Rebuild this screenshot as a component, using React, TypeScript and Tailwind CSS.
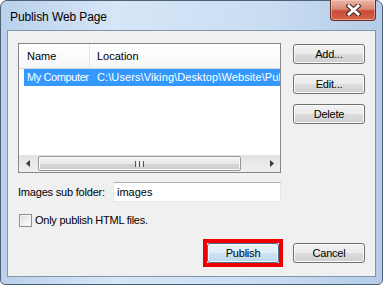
const btn =
  'h-[20px] w-[72px] rounded-[3px] border border-[#707070] bg-[linear-gradient(to_bottom,#f2f2f2_0%,#ebebeb_49%,#dddddd_50%,#cfcfcf_100%)] shadow-[inset_0_0_0_1px_#fcfcfc] flex items-center justify-center text-[11px] tracking-[-0.2px]';

function CloseButton() {
  return (
    <div className="-mt-[1px] h-[21px] w-[46px] rounded-b-[4px] border border-t-0 border-[#6b2d24] bg-[linear-gradient(to_bottom,#ecb4a6_0%,#dc8a77_45%,#c84a33_55%,#d5644a_100%)] shadow-[inset_0_0_0_1px_rgba(255,210,200,0.5)] flex items-center justify-center">
      <svg width="15" height="12" viewBox="0 0 15 12">
        <path d="M3 2 L12 10 M12 2 L3 10" stroke="#43221c" strokeWidth="5" strokeLinecap="square" />
        <path d="M3 2 L12 10 M12 2 L3 10" stroke="#ffffff" strokeWidth="3" strokeLinecap="square" />
      </svg>
    </div>
  );
}

function Arrow({ dir }: { dir: 'left' | 'right' }) {
  return (
    <div className="w-[17px] h-full flex items-center justify-center">
      <svg width="4" height="7" viewBox="0 0 4 7">
        {dir === 'left' ? <path d="M4 0 L0 3.5 L4 7 Z" fill="#3a3a3a" /> : <path d="M0 0 L4 3.5 L0 7 Z" fill="#3a3a3a" />}
      </svg>
    </div>
  );
}

export default function App() {
  return (
    <div className="w-[383px] h-[285px] font-['Liberation_Sans',Arial,sans-serif] text-[11px] text-black">
      <div className="w-full h-full flex flex-col rounded-t-[7px] rounded-b-[5px] border border-[#4e6075] bg-[linear-gradient(to_right,#b9d1eb_0%,#d6e6f7_30%,#c9ddf2_70%,#b4cce7_100%)] px-[6px] pb-[7px]">
        {/* title bar */}
        <div className="h-[29px] flex items-start justify-between">
          <span className="mt-[9px] ml-[3px] text-[12px] leading-[14px] tracking-[-0.1px] text-black">Publish Web Page</span>
          <CloseButton />
        </div>

        {/* client area */}
        <div className="flex-1 flex flex-col border border-[#8196ad] bg-[#f0f0f0] pl-[10px] pr-[10px] pt-[12px] pb-[9px]">
          <div className="flex">
            {/* list view */}
            <div className="w-[263px] h-[130px] flex flex-col border border-[#828790] bg-white">
              <div className="h-[25px] flex border-b border-[#d5d5d5] bg-[linear-gradient(to_bottom,#ffffff,#f6f7f9)]">
                <div className="w-[71px] border-r border-[#e3e5e8] pl-[8px] flex items-center">Name</div>
                <div className="pl-[7px] flex items-center">Location</div>
              </div>
              <div className="ml-[5px] h-[17px] flex items-center bg-[#3399ff] text-white whitespace-nowrap overflow-hidden">
                <div className="w-[66px] shrink-0 pl-[3px] tracking-[-0.4px]">My Computer</div>
                <div className="pl-[7px] tracking-[0.1px]">C:\Users\Viking\Desktop\Website\Publish</div>
              </div>
              <div className="flex-1" />
              {/* horizontal scrollbar */}
              <div className="h-[17px] flex items-center bg-[linear-gradient(to_bottom,#e3e3e3,#efefef)]">
                <Arrow dir="left" />
                <div className="ml-[2px] w-[203px] h-[15px] rounded-[2px] border border-[#979797] bg-[linear-gradient(to_bottom,#f4f4f4_0%,#e8e8e8_50%,#d6d6d6_51%,#cdcdcd_100%)] shadow-[inset_0_0_0_1px_#fafafa] flex items-center justify-center gap-[1px]">
                  <span className="w-[1px] h-[6px] bg-[#555]" />
                  <span className="w-[1px] h-[6px] bg-[#fff]" />
                  <span className="w-[1px] h-[6px] bg-[#555]" />
                  <span className="w-[1px] h-[6px] bg-[#fff]" />
                  <span className="w-[1px] h-[6px] bg-[#555]" />
                </div>
                <div className="flex-1" />
                <Arrow dir="right" />
              </div>
            </div>

            {/* side buttons */}
            <div className="ml-[12px] mt-[1px] flex flex-col gap-[10px]">
              <div className={btn}>Add...</div>
              <div className={btn}>Edit...</div>
              <div className={btn}>Delete</div>
            </div>
          </div>

          {/* images sub folder */}
          <div className="mt-[9px] flex items-center">
            <span className="w-[95px] tracking-[-0.2px]">Images sub folder:</span>
            <div className="w-[168px] h-[20px] border border-[#e3e9ef] border-t-[#abadb3] bg-white pl-[3px] flex items-center">images</div>
          </div>

          {/* checkbox */}
          <div className="mt-[10px] flex items-center">
            <div className="ml-[1px] w-[13px] h-[13px] border border-[#8e8f8f] bg-[linear-gradient(135deg,#dcdcdc,#ffffff)] shadow-[inset_0_0_0_1px_#f4f4f4]" />
            <span className="ml-[3px] tracking-[-0.25px]">Only publish HTML files.</span>
          </div>

          {/* bottom buttons */}
          <div className="mt-auto flex items-center justify-end gap-[10px]">
            <div className="border-4 border-[#ee0000]">
              <div className="h-[20px] w-[72px] rounded-[3px] border border-[#4d6f8c] bg-[linear-gradient(to_bottom,#eaf4fb_0%,#dcecf8_49%,#cde3f4_50%,#bcd8ee_100%)] shadow-[inset_0_0_0_1px_#f4fbff] flex items-center justify-center text-[11px] tracking-[-0.2px]">
                Publish
              </div>
            </div>
            <div className={btn}>Cancel</div>
          </div>
        </div>
      </div>
    </div>
  );
}
